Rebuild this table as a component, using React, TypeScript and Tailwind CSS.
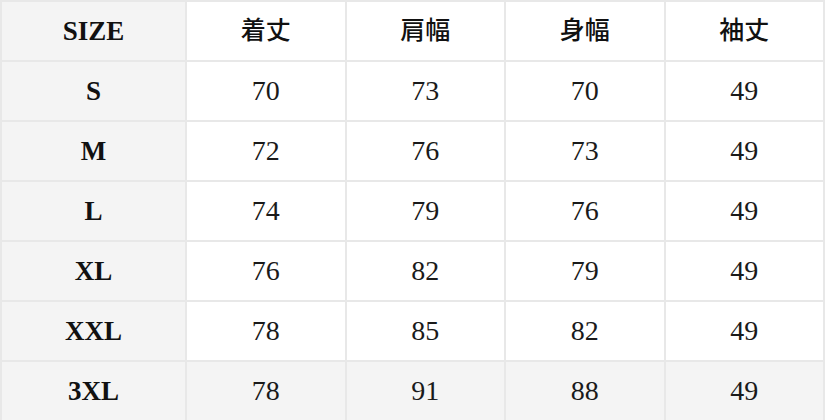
const headers = ['着丈', '肩幅', '身幅', '袖丈'];

const rows: [string, number[]][] = [
  ['S', [70, 73, 70, 49]],
  ['M', [72, 76, 73, 49]],
  ['L', [74, 79, 76, 49]],
  ['XL', [76, 82, 79, 49]],
  ['XXL', [78, 85, 82, 49]],
  ['3XL', [78, 91, 88, 49]],
];

export default function App() {
  return (
    <div className="w-[825px] h-[420px] bg-white text-[#111]" style={{ fontFamily: '"Liberation Serif", "Noto Sans CJK JP", serif' }}>
      <table className="w-full h-full border-collapse table-fixed border-2 border-[#e8e8e8]">
        <colgroup>
          <col className="w-[185px]" />
          <col />
          <col />
          <col />
          <col />
        </colgroup>
        <thead>
          <tr className="h-[60px]">
            <th className="border-2 border-[#e8e8e8] bg-[#f4f4f4] text-[27px] font-bold">SIZE</th>
            {headers.map((h) => (
              <th key={h} className="border-2 border-[#e8e8e8] bg-white text-[25px] font-medium">
                {h}
              </th>
            ))}
          </tr>
        </thead>
        <tbody>
          {rows.map(([size, vals], i) => {
            const last = i === rows.length - 1;
            return (
              <tr key={size} className={last ? 'h-[60px] bg-[#f4f4f4]' : 'h-[60px] bg-white'}>
                <td className="border-2 border-[#e8e8e8] bg-[#f4f4f4] text-center text-[27px] font-bold">{size}</td>
                {vals.map((v, j) => (
                  <td key={j} className="border-2 border-[#e8e8e8] text-center text-[28px] text-[#1a1a1a]">
                    {v}
                  </td>
                ))}
              </tr>
            );
          })}
        </tbody>
      </table>
    </div>
  );
}
